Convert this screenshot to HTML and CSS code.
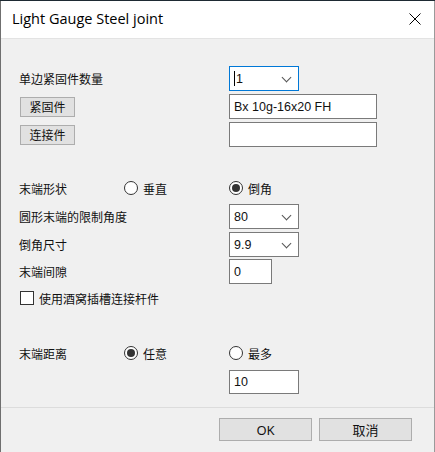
FILE: index.html
```html
<!DOCTYPE html>
<html lang="zh-CN">
<head>
  <meta charset="UTF-8" />
  <title>Light Gauge Steel joint</title>
  <link rel="stylesheet" href="styles.css">
</head>
<body>

  <div class="window">
    <!-- Titel -->
    <div class="titlebar">
      <span class="title">Light Gauge Steel joint</span>
      <svg class="close" width="12" height="12" viewBox="0 0 12 12">
        <path d="M0.5 0.5 L11.5 11.5 M11.5 0.5 L0.5 11.5" stroke="#000" stroke-width="1" fill="none" />
      </svg>
    </div>

    <div class="content">
      <div class="row r1">
        <span class="label">单边紧固件数量</span>
        <span></span>
        <div class="combo focus"><span class="caret"></span>1<i class="chev"></i></div>
      </div>
      <div class="row r2">
        <button class="btn small">紧固件</button>
        <span></span>
        <div class="textbox wide">Bx 10g-16x20 FH</div>
      </div>
      <div class="row r3">
        <button class="btn small">连接件</button>
        <span></span>
        <div class="textbox wide"></div>
      </div>

      <div class="row r4">
        <span class="label">末端形状</span>
        <span class="radio"><i class="dot"></i>垂直</span>
        <span class="radio"><i class="dot on"></i>倒角</span>
      </div>
      <div class="row r5">
        <span class="label">圆形末端的限制角度</span>
        <span></span>
        <div class="combo">80<i class="chev"></i></div>
      </div>
      <div class="row r6">
        <span class="label">倒角尺寸</span>
        <span></span>
        <div class="combo">9.9<i class="chev"></i></div>
      </div>
      <div class="row r7">
        <span class="label">末端间隙</span>
        <span></span>
        <div class="textbox short">0</div>
      </div>
      <div class="row r8">
        <span class="check"><i class="box"></i>使用酒窝插槽连接杆件</span>
      </div>

      <div class="row r9">
        <span class="label">末端距离</span>
        <span class="radio"><i class="dot on"></i>任意</span>
        <span class="radio"><i class="dot"></i>最多</span>
      </div>
      <div class="row r10">
        <span></span>
        <span></span>
        <div class="textbox mid">10</div>
      </div>
    </div>

    <div class="footer">
      <button class="btn big">OK</button>
      <button class="btn big">取消</button>
    </div>
  </div>

</body>
</html>
```

FILE: styles.css
```css
body {
  margin: 0;
  background: #1e2a33;
  font-family: "Noto Sans CJK SC", "Noto Sans", sans-serif;
  font-size: 12px;
  color: #111;
}
.window {
  margin-top: 1px;
  height: 451px;
  background: #f0f0f0;
  border-left: 1px solid #6f6f6f;
  border-right: 1px solid #9a9a9a;
  box-sizing: border-box;
}
.titlebar {
  height: 37px;
  background: #fff;
  border-bottom: 1px solid #e3e3e3;
  display: flex;
  align-items: center;
  justify-content: space-between;
  padding: 0 13px 0 11px;
}
.title {
  font-family: "Open Sans", sans-serif;
  font-size: 14.5px;
  margin-top: -2px;
  color: #000;
}
.close {
  margin-top: -1px;
}
.content {
  padding-left: 18px;
  height: 369px;
  border-bottom: 1px solid #dcdcdc;
  box-sizing: border-box;
}
.row {
  display: grid;
  grid-template-columns: 105px 105px auto;
  align-items: center;
}
.r1 { padding-top: 27px; height: 25px; }
.r2 { margin-top: 3px; height: 25px; }
.r3 { margin-top: 3px; height: 25px; }
.r4 { margin-top: 31px; height: 20px; }
.r5 { margin-top: 6px; height: 25px; }
.r6 { margin-top: 3px; height: 25px; }
.r7 { margin-top: 2px; height: 25px; }
.r8 { margin-top: 5px; height: 18px; display: flex; }
.r9 { margin-top: 36px; height: 20px; }
.r10 { margin-top: 7px; height: 24px; }

.label {
  white-space: nowrap;
}
.combo, .textbox {
  height: 25px;
  box-sizing: border-box;
  background: #fff;
  border: 1px solid #7a7a7a;
  font-family: "Liberation Sans", Arial, sans-serif;
  font-size: 12.5px;
  display: flex;
  align-items: center;
  padding-left: 4px;
  position: relative;
}
.combo {
  width: 70px;
}
.combo.focus {
  border-color: #0078d7;
}
.caret {
  width: 1px;
  height: 15px;
  background: #000;
  margin-right: 1px;
}
.chev {
  position: absolute;
  right: 8px;
  top: 7px;
  width: 6px;
  height: 6px;
  border-right: 1px solid #555;
  border-bottom: 1px solid #555;
  transform: rotate(45deg);
}
.textbox.wide { width: 148px; }
.textbox.short { width: 43px; }
.textbox.mid { width: 70px; height: 24px; }
.btn {
  font-family: "Noto Sans CJK SC", "Noto Sans", sans-serif;
  background: #e1e1e1;
  border: 1px solid #adadad;
  padding: 0;
  color: #111;
}
.btn.small {
  width: 55px;
  height: 20px;
  font-size: 12px;
  line-height: 16px;
  margin-left: 1px;
}
.radio, .check {
  display: flex;
  align-items: center;
  gap: 5px;
  white-space: nowrap;
}
.dot {
  flex-shrink: 0;
  width: 14px;
  height: 14px;
  box-sizing: border-box;
  border: 1px solid #333;
  border-radius: 50%;
  background: #fff;
  display: flex;
  align-items: center;
  justify-content: center;
}
.dot.on::after {
  content: "";
  width: 8px;
  height: 8px;
  border-radius: 50%;
  background: #333;
}
.box {
  flex-shrink: 0;
  width: 14px;
  height: 14px;
  box-sizing: border-box;
  border: 1px solid #333;
  background: #fff;
  margin-left: 1px;
}
.footer {
  display: flex;
  justify-content: flex-end;
  gap: 7px;
  padding: 10px 22px 0 0;
}
.btn.big {
  width: 93px;
  height: 23px;
  font-family: "Noto Sans", "Noto Sans CJK SC", sans-serif;
  font-size: 13px;
}
```
